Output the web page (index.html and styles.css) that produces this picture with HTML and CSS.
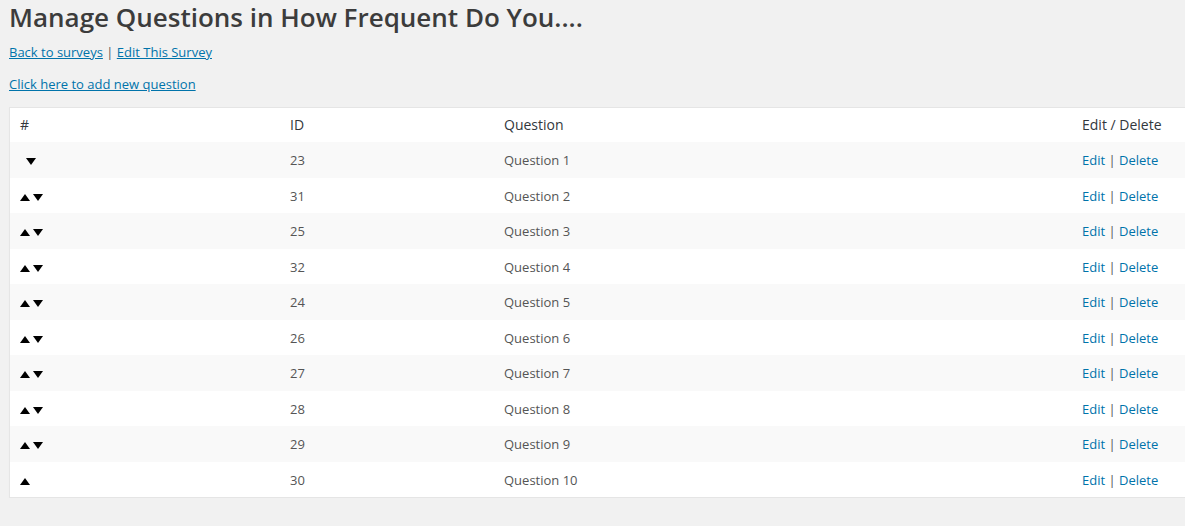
FILE: index.html
```html
<!DOCTYPE html>
<html>
<head>
<meta charset="utf-8">
<link rel="stylesheet" href="styles.css">
</head>
<body>
<div class="wrap">
  <h2 class="title">Manage Questions in How Frequent Do You....</h2>
  <p class="nav"><a href="#">Back to surveys</a> | <a href="#">Edit This Survey</a></p>
  <p class="nav"><a href="#">Click here to add new question</a></p>
  <table class="widefat">
    <thead>
      <tr><th class="c1">#</th><th class="c2">ID</th><th class="c3">Question</th><th class="c4">Edit / Delete</th></tr>
    </thead>
    <tbody>
      <tr><td><span class="arrows"><span class="sp"></span><svg class="dn" width="10" height="7" viewBox="0 0 10 7"><polygon points="0,0 10,0 5,7"/></svg></span></td><td>23</td><td>Question 1</td><td><a href="#">Edit</a> | <a href="#">Delete</a></td></tr>
      <tr><td><span class="arrows"><svg class="up" width="10" height="7" viewBox="0 0 10 7"><polygon points="5,0 10,7 0,7"/></svg><svg class="dn" width="10" height="7" viewBox="0 0 10 7"><polygon points="0,0 10,0 5,7"/></svg></span></td><td>31</td><td>Question 2</td><td><a href="#">Edit</a> | <a href="#">Delete</a></td></tr>
      <tr><td><span class="arrows"><svg class="up" width="10" height="7" viewBox="0 0 10 7"><polygon points="5,0 10,7 0,7"/></svg><svg class="dn" width="10" height="7" viewBox="0 0 10 7"><polygon points="0,0 10,0 5,7"/></svg></span></td><td>25</td><td>Question 3</td><td><a href="#">Edit</a> | <a href="#">Delete</a></td></tr>
      <tr><td><span class="arrows"><svg class="up" width="10" height="7" viewBox="0 0 10 7"><polygon points="5,0 10,7 0,7"/></svg><svg class="dn" width="10" height="7" viewBox="0 0 10 7"><polygon points="0,0 10,0 5,7"/></svg></span></td><td>32</td><td>Question 4</td><td><a href="#">Edit</a> | <a href="#">Delete</a></td></tr>
      <tr><td><span class="arrows"><svg class="up" width="10" height="7" viewBox="0 0 10 7"><polygon points="5,0 10,7 0,7"/></svg><svg class="dn" width="10" height="7" viewBox="0 0 10 7"><polygon points="0,0 10,0 5,7"/></svg></span></td><td>24</td><td>Question 5</td><td><a href="#">Edit</a> | <a href="#">Delete</a></td></tr>
      <tr><td><span class="arrows"><svg class="up" width="10" height="7" viewBox="0 0 10 7"><polygon points="5,0 10,7 0,7"/></svg><svg class="dn" width="10" height="7" viewBox="0 0 10 7"><polygon points="0,0 10,0 5,7"/></svg></span></td><td>26</td><td>Question 6</td><td><a href="#">Edit</a> | <a href="#">Delete</a></td></tr>
      <tr><td><span class="arrows"><svg class="up" width="10" height="7" viewBox="0 0 10 7"><polygon points="5,0 10,7 0,7"/></svg><svg class="dn" width="10" height="7" viewBox="0 0 10 7"><polygon points="0,0 10,0 5,7"/></svg></span></td><td>27</td><td>Question 7</td><td><a href="#">Edit</a> | <a href="#">Delete</a></td></tr>
      <tr><td><span class="arrows"><svg class="up" width="10" height="7" viewBox="0 0 10 7"><polygon points="5,0 10,7 0,7"/></svg><svg class="dn" width="10" height="7" viewBox="0 0 10 7"><polygon points="0,0 10,0 5,7"/></svg></span></td><td>28</td><td>Question 8</td><td><a href="#">Edit</a> | <a href="#">Delete</a></td></tr>
      <tr><td><span class="arrows"><svg class="up" width="10" height="7" viewBox="0 0 10 7"><polygon points="5,0 10,7 0,7"/></svg><svg class="dn" width="10" height="7" viewBox="0 0 10 7"><polygon points="0,0 10,0 5,7"/></svg></span></td><td>29</td><td>Question 9</td><td><a href="#">Edit</a> | <a href="#">Delete</a></td></tr>
      <tr><td><span class="arrows"><svg class="up" width="10" height="7" viewBox="0 0 10 7"><polygon points="5,0 10,7 0,7"/></svg></span></td><td>30</td><td>Question 10</td><td><a href="#">Edit</a> | <a href="#">Delete</a></td></tr>
    </tbody>
  </table>
</div>
</body>
</html>
```

FILE: styles.css
```css
html, body {
  margin: 0;
  padding: 0;
  overflow: hidden;
  background: #f1f1f1;
}
body {
  font-family: "Open Sans", sans-serif;
  font-size: 13px;
  line-height: 1.4em;
  color: #444;
}
.wrap {
  padding: 0 0 0 9px;
}
.title {
  margin: 0;
  padding: 1px 0 3px 0;
  font-size: 26px;
  font-weight: 600;
  line-height: 32px;
  color: #3c3c3c;
}
.nav {
  margin: 7px 0 14px 0;
  color: #555;
}
.nav a {
  color: #0073aa;
  text-decoration: underline;
}
.widefat {
  width: 1200px;
  border-spacing: 0;
  border-collapse: separate;
  background: #fff;
  border: 1px solid #e5e5e5;
  box-shadow: 0 1px 1px rgba(0,0,0,.04);
  margin-top: 0;
}
.widefat th {
  text-align: left;
  font-weight: 400;
  font-size: 14px;
  line-height: 18px;
  color: #32373c;
  padding: 8px 10px;
}
.widefat td {
  font-size: 13px;
  line-height: 19.5px;
  height: 19.5px;
  color: #555;
  padding: 9px 10px 7px 10px;
  vertical-align: middle;
}
.widefat tbody tr:nth-child(odd) {
  background: #f9f9f9;
}
.widefat td a {
  color: #0073aa;
  text-decoration: none;
}
.c1 { width: 250px; }
.c2 { width: 194px; }
.c3 { width: 558px; }
.arrows {
  display: flex;
  align-items: center;
  gap: 3px;
  height: 19.5px;
  padding-top: 1px;
  box-sizing: border-box;
}
.arrows svg { display: block; fill: #000; }
.arrows .sp { width: 3px; }
```
